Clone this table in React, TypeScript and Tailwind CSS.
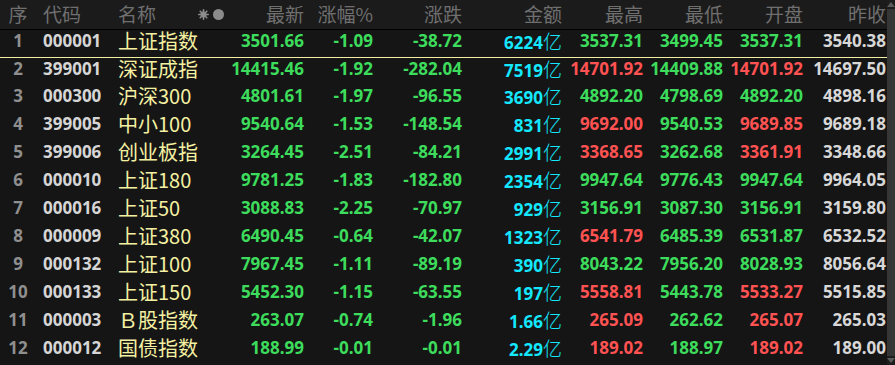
import React from 'react';

type Row = {
  no: number;
  code: string;
  name: string;
  last: string;
  pct: string;
  chg: string;
  amt: string;
  high: string;
  low: string;
  open: string;
  prev: string;
};

const rows: Row[] = [
  { no: 1, code: '000001', name: '上证指数', last: '3501.66', pct: '-1.09', chg: '-38.72', amt: '6224', high: '3537.31', low: '3499.45', open: '3537.31', prev: '3540.38' },
  { no: 2, code: '399001', name: '深证成指', last: '14415.46', pct: '-1.92', chg: '-282.04', amt: '7519', high: '14701.92', low: '14409.88', open: '14701.92', prev: '14697.50' },
  { no: 3, code: '000300', name: '沪深300', last: '4801.61', pct: '-1.97', chg: '-96.55', amt: '3690', high: '4892.20', low: '4798.69', open: '4892.20', prev: '4898.16' },
  { no: 4, code: '399005', name: '中小100', last: '9540.64', pct: '-1.53', chg: '-148.54', amt: '831', high: '9692.00', low: '9540.53', open: '9689.85', prev: '9689.18' },
  { no: 5, code: '399006', name: '创业板指', last: '3264.45', pct: '-2.51', chg: '-84.21', amt: '2991', high: '3368.65', low: '3262.68', open: '3361.91', prev: '3348.66' },
  { no: 6, code: '000010', name: '上证180', last: '9781.25', pct: '-1.83', chg: '-182.80', amt: '2354', high: '9947.64', low: '9776.43', open: '9947.64', prev: '9964.05' },
  { no: 7, code: '000016', name: '上证50', last: '3088.83', pct: '-2.25', chg: '-70.97', amt: '929', high: '3156.91', low: '3087.30', open: '3156.91', prev: '3159.80' },
  { no: 8, code: '000009', name: '上证380', last: '6490.45', pct: '-0.64', chg: '-42.07', amt: '1323', high: '6541.79', low: '6485.39', open: '6531.87', prev: '6532.52' },
  { no: 9, code: '000132', name: '上证100', last: '7967.45', pct: '-1.11', chg: '-89.19', amt: '390', high: '8043.22', low: '7956.20', open: '8028.93', prev: '8056.64' },
  { no: 10, code: '000133', name: '上证150', last: '5452.30', pct: '-1.15', chg: '-63.55', amt: '197', high: '5558.81', low: '5443.78', open: '5533.27', prev: '5515.85' },
  { no: 11, code: '000003', name: 'Ｂ股指数', last: '263.07', pct: '-0.74', chg: '-1.96', amt: '1.66', high: '265.09', low: '262.62', open: '265.07', prev: '265.03' },
  { no: 12, code: '000012', name: '国债指数', last: '188.99', pct: '-0.01', chg: '-0.01', amt: '2.29', high: '189.02', low: '188.97', open: '189.02', prev: '189.00' },
];

const GREEN = 'text-[#3ddc5c]';
const RED = 'text-[#ff5252]';

// price colour against previous close
const tone = (v: string, prev: string) => {
  const a = parseFloat(v);
  const b = parseFloat(prev);
  if (a > b) return RED;
  if (a < b) return GREEN;
  return 'text-[#d8d8d8]';
};

const cols = 'grid grid-cols-[36px_82px_110px_76px_69px_89px_100px_81px_80px_80px_83px]';
const cjk = "font-['Noto_Sans_CJK_SC',sans-serif]";
const num = "font-['Noto_Sans',sans-serif] font-bold text-[17px]";

const Header = () => (
  <div className={`${cols} h-[30px] items-center bg-[#1b1b1b] border-b border-black text-[19px] text-[#6f6f6f] ${cjk} leading-[22px]`}>
    <span className="text-center">序</span>
    <span className="pl-[7px]">代码</span>
    <div className="flex items-center justify-between pr-[4px]">
      <span>名称</span>
      <span className="flex items-center gap-[4px]">
        <svg width="11" height="11" viewBox="0 0 11 11" className="text-[#8c8c8c]">
          <g stroke="currentColor" strokeWidth="1.6" strokeLinecap="round">
            <line x1="5.5" y1="0.8" x2="5.5" y2="10.2" />
            <line x1="0.8" y1="5.5" x2="10.2" y2="5.5" />
            <line x1="2.2" y1="2.2" x2="8.8" y2="8.8" />
            <line x1="2.2" y1="8.8" x2="8.8" y2="2.2" />
          </g>
          <circle cx="5.5" cy="5.5" r="3" fill="currentColor" />
        </svg>
        <span className="w-[11px] h-[11px] rounded-full bg-[#8c8c8c]" />
      </span>
    </div>
    <span className="text-right">最新</span>
    <span className="text-right">涨幅%</span>
    <span className="text-right">涨跌</span>
    <span className="text-right">金额</span>
    <span className="text-right">最高</span>
    <span className="text-right">最低</span>
    <span className="text-right">开盘</span>
    <span className="text-right">昨收</span>
  </div>
);

const TableRow = ({ r }: { r: Row }) => (
  <div
    className={`${cols} h-[28.4px] items-start leading-[21px] ${
      r.no === 1 ? 'border-b border-[#f2eea4]' : ''
    }`}
  >
    <span className={`${num} text-center text-[#8f8f8f]`}>{r.no}</span>
    <span className={`${num} pl-[7px] text-[#d6d6d6]`}>{r.code}</span>
    <span className={`${cjk} text-[20px] text-[#f4f0a2]`}>{r.name}</span>
    <span className={`${num} text-right ${GREEN}`}>{r.last}</span>
    <span className={`${num} text-right ${GREEN}`}>{r.pct}</span>
    <span className={`${num} text-right ${GREEN}`}>{r.chg}</span>
    <span className="text-right text-[#14e8ff] whitespace-nowrap">
      <span className={num}>{r.amt}</span>
      <span className={`${cjk} text-[19px] font-light`}>亿</span>
    </span>
    <span className={`${num} text-right ${tone(r.high, r.prev)}`}>{r.high}</span>
    <span className={`${num} text-right ${tone(r.low, r.prev)}`}>{r.low}</span>
    <span className={`${num} text-right ${tone(r.open, r.prev)}`}>{r.open}</span>
    <span className={`${num} text-right text-[#d8d8d8]`}>{r.prev}</span>
  </div>
);

const Scrollbar = () => (
  <div className="w-[8px] h-full flex flex-col bg-[#1d1d1d]">
    <div className="h-[9px] flex items-center justify-center">
      <div className="w-0 h-0 border-l-[4px] border-r-[4px] border-b-[5px] border-l-transparent border-r-transparent border-b-[#5a5a5a]" />
    </div>
    <div className="flex-1 bg-[#363636]" />
    <div className="h-[9px] flex items-center justify-center">
      <div className="w-0 h-0 border-l-[4px] border-r-[4px] border-t-[5px] border-l-transparent border-r-transparent border-t-[#5a5a5a]" />
    </div>
  </div>
);

export default function App() {
  return (
    <div className="w-[895px] h-[365px] overflow-hidden bg-[#151515] flex">
      <div className="w-[887px] flex flex-col overflow-hidden">
        <Header />
        {rows.map((r) => (
          <TableRow key={r.no} r={r} />
        ))}
      </div>
      <Scrollbar />
    </div>
  );
}
